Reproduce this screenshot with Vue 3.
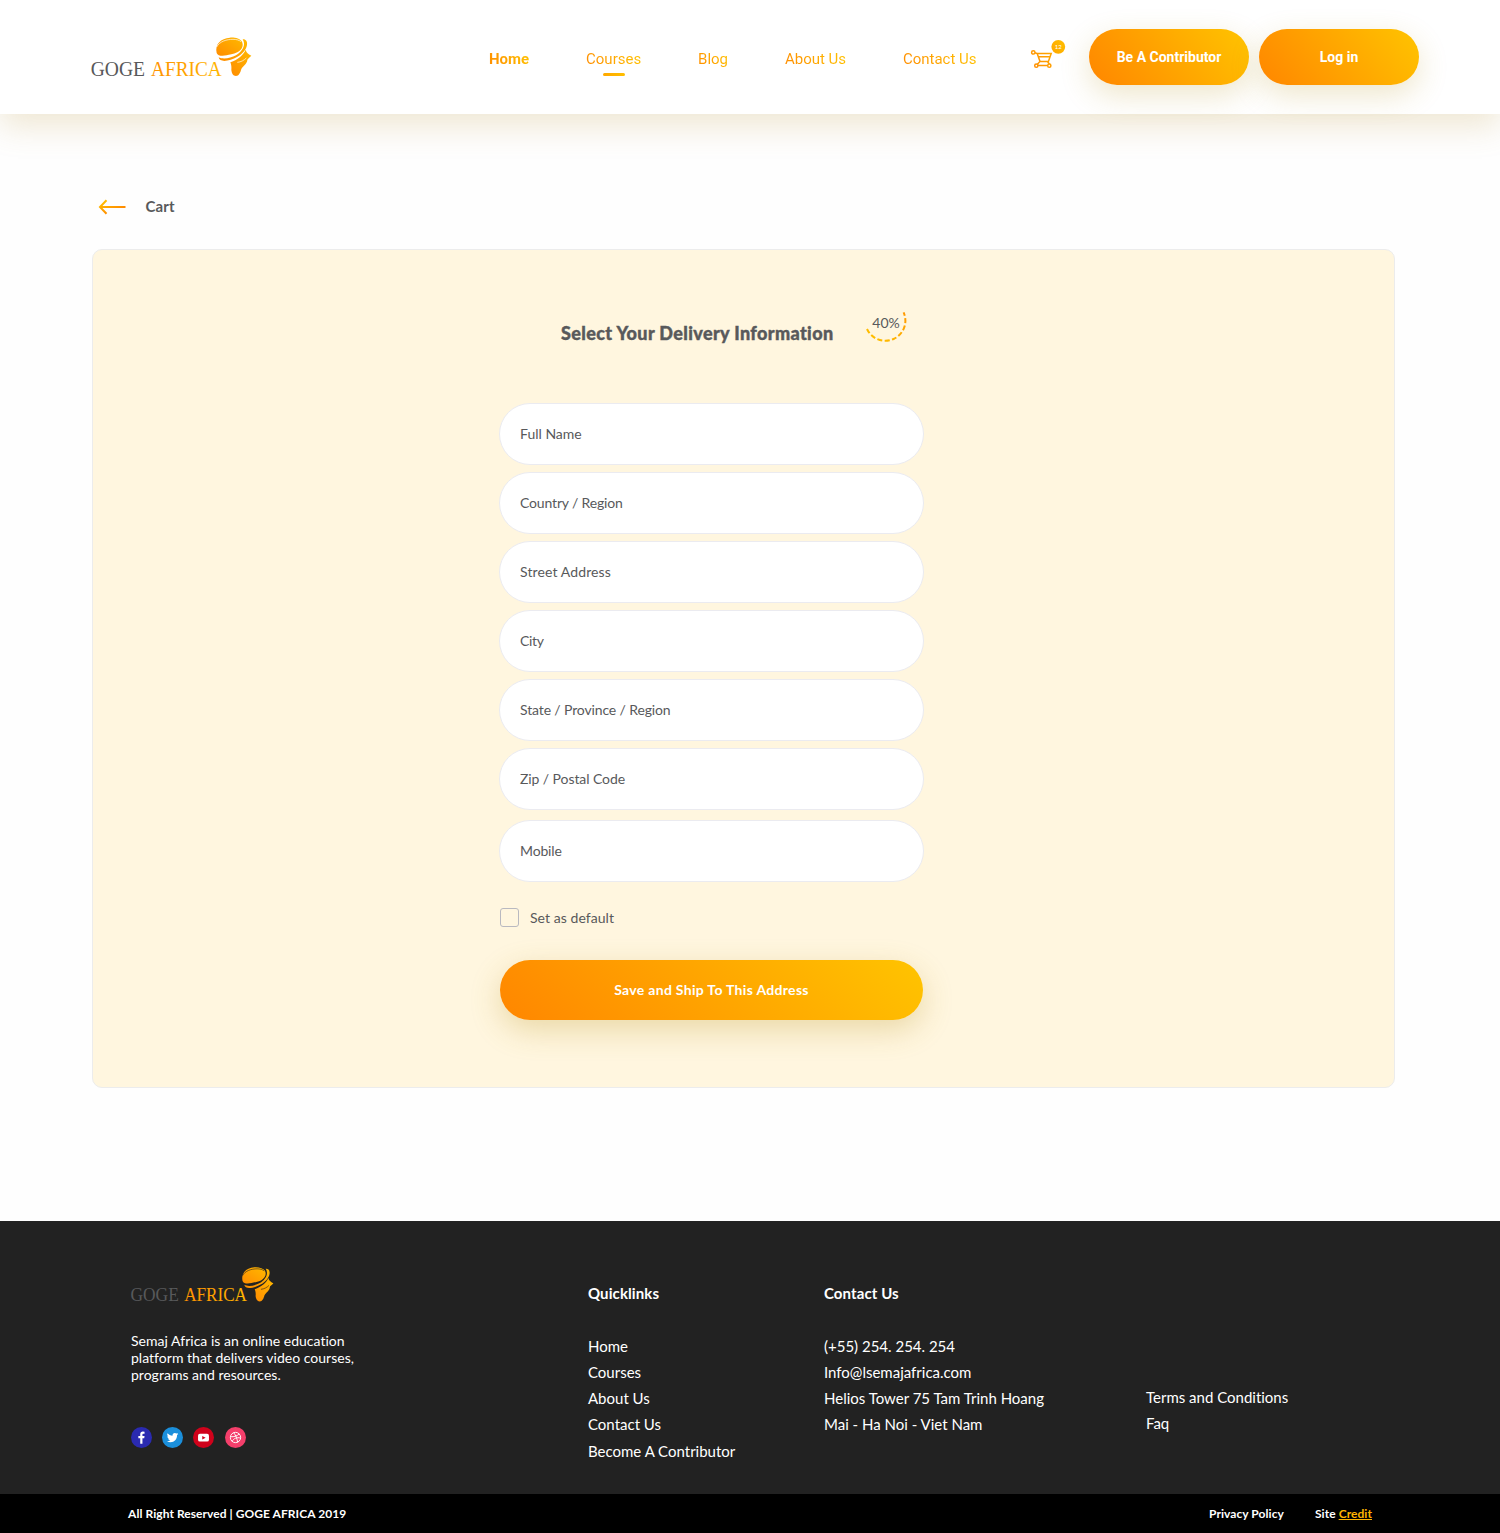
<script setup>
import { h } from 'vue'

const nav = [
  { label: 'Home', bold: true },
  { label: 'Courses', active: true },
  { label: 'Blog' },
  { label: 'About Us' },
  { label: 'Contact Us' },
]
const fields = [
  { label: 'Full Name', track: 0 },
  { label: 'Country / Region', track: -0.16 },
  { label: 'Street Address', track: 0.12 },
  { label: 'City', track: -0.3 },
  { label: 'State / Province / Region', track: -0.13 },
  { label: 'Zip / Postal Code', track: -0.08 },
  { label: 'Mobile', track: -0.15 },
]
const quicklinks = ['Home', 'Courses', 'About Us', 'Contact Us', 'Become A Contributor']
const contacts = ['(+55) 254. 254. 254', 'Info@lsemajafrica.com', 'Helios Tower 75 Tam Trinh Hoang', 'Mai - Ha Noi - Viet Nam']

const stop = (offset, color) => h('stop', { offset, 'stop-color': color })

// Wordmark plus head-wrap emblem, shared by the header and the footer
const BrandLogo = (props) =>
  h('svg', { viewBox: '0 0 570 195', role: 'img', 'aria-label': 'Goge Africa' }, [
    h('defs', [
      h('linearGradient', { id: props.uid + 'w', x1: 0, x2: 1, y1: 0, y2: 0 }, [stop('0', '#ff9100'), stop('1', '#ffb600')]),
      h('linearGradient', { id: props.uid + 'm', x1: 0, x2: 1, y1: 1, y2: 0 }, [stop('0', '#ff8c00'), stop('1', '#ffb900')]),
    ]),
    h('g', { 'font-family': '"Liberation Serif", serif', 'font-size': 66 }, [
      h('text', { x: 32, y: 152, textLength: 163, lengthAdjust: 'spacingAndGlyphs', fill: props.ink }, 'GOGE'),
      h('text', { x: 213, y: 152, textLength: 212, lengthAdjust: 'spacingAndGlyphs', fill: `url(#${props.uid}w)` }, 'AFRICA'),
    ]),
    h('g', { fill: `url(#${props.uid}m)` }, [
      h('path', { d: 'M410 84C404 58 422 40 450 38C466 37 480 42 485 49C492 61 487 74 472 82C460 88 447 89 440 91C427 94 413 93 410 84Z' }),
      h('path', { d: 'M488 43C497 42 503 49 501 60C499 74 486 88 471 96C452 107 419 115 416 97C428 104 452 100 468 91C487 80 499 60 488 43Z' }),
      h('path', { d: 'M497 74C499 84 507 88 514 92C509 98 502 101 502 105C501 117 490 122 484 132C481 143 477 153 468 153C459 153 455 144 454 135C455 127 454 119 451 112C475 103 490 90 497 74Z' }),
    ]),
    h('g', { fill: 'none', stroke: props.bg, 'stroke-width': 2 }, [
      h('path', { d: 'M410 66C419 49 440 43 459 43C469 43 477 45 483 50' }),
      h('path', { d: 'M472 112C483 111 492 106 499 99' }),
    ]),
  ])
BrandLogo.props = ['uid', 'ink', 'bg']
</script>

<template>
  <div class="page">
    <header class="topbar">
      <BrandLogo class="logo" uid="top" ink="#58595b" bg="#fff" />
      <nav class="nav">
        <a v-for="n in nav" :key="n.label" :class="{ bold: n.bold, active: n.active }"><span>{{ n.label }}</span></a>
      </nav>
      <div class="cart">
        <svg width="36" height="32" viewBox="0 0 36 32">
          <defs>
            <linearGradient id="cartg" gradientUnits="userSpaceOnUse" x1="2" y1="28" x2="32" y2="4">
              <stop offset="0" stop-color="#ff8c00" /><stop offset="1" stop-color="#ffb900" />
            </linearGradient>
          </defs>
          <g fill="none" stroke="url(#cartg)" stroke-width="1.5">
            <circle cx="3.3" cy="13.4" r="1.7" />
            <path d="M5 13.8L7.2 14.6L10 22.4L7.2 25.6M7.4 14.6H21.2L18.4 22.6H9.6M8.6 17.8H19.6M8 26.4H17.6M17.6 22.8L19.4 25" />
            <circle cx="6.3" cy="26.7" r="1.6" />
            <circle cx="19.3" cy="26.7" r="1.6" />
          </g>
          <circle cx="28.3" cy="7.8" r="6.9" fill="url(#cartg)" />
          <text x="28.3" y="9.9" text-anchor="middle" font-family="Lato, sans-serif" font-size="6" fill="#fff">12</text>
        </svg>
      </div>
      <button class="pill">Be A Contributor</button>
      <button class="pill">Log in</button>
    </header>

    <main>
      <div class="crumb">
        <svg width="28" height="16" viewBox="0 0 28 16">
          <defs>
            <linearGradient id="arr" gradientUnits="userSpaceOnUse" x1="4" y1="1" x2="10" y2="15">
              <stop offset="0" stop-color="#ffc400" /><stop offset="1" stop-color="#ff8c00" />
            </linearGradient>
          </defs>
          <path d="M8.5 1.2L2 8L8.5 14.8M2 8H27.5" fill="none" stroke="url(#arr)" stroke-width="2" />
        </svg>
        <span>Cart</span>
      </div>

      <section class="card">
        <div class="heading">
          <h1>Select Your Delivery Information</h1>
          <div class="progress">
            <svg width="44" height="44" viewBox="0 0 44 44">
              <defs>
                <linearGradient id="prog" x1="0" y1="1" x2="1" y2="0">
                  <stop offset="0" stop-color="#ffc400" /><stop offset="1" stop-color="#ff9800" />
                </linearGradient>
              </defs>
              <path d="M3 30A19.5 19.5 0 0 0 39.6 13.4" fill="none" stroke="url(#prog)" stroke-width="2" stroke-dasharray="5 2.4" />
            </svg>
            <span>40%</span>
          </div>
        </div>
        <form class="form" @submit.prevent>
          <label v-for="f in fields" :key="f.label" class="field" :style="{ letterSpacing: f.track + 'px' }">{{ f.label }}</label>
          <div class="default"><i></i><span>Set as default</span></div>
          <button class="save">Save and Ship To This Address</button>
        </form>
      </section>
    </main>

    <footer>
      <div class="foot">
        <div class="about">
          <BrandLogo class="flogo" uid="foot" ink="#58595b" bg="#222" />
          <p>Semaj Africa is an online education<br />platform that delivers video courses,<br />programs and resources.</p>
          <div class="social">
            <svg viewBox="0 0 20 20"><circle cx="10" cy="10" r="10" fill="#2a2ab0" /><path d="M8.8 16V10.6H7V8.5H8.8V7C8.8 5.2 9.8 4.4 11.3 4.4L12.9 4.5V6.4H11.8C11 6.4 10.9 6.8 10.9 7.3V8.5H12.9L12.6 10.6H10.9V16Z" fill="#fff" /></svg>
            <svg viewBox="0 0 20 20"><circle cx="10" cy="10" r="10" fill="#1b8fdb" /><path d="M15.5 6.6L14.3 7C14.8 6.7 15 6.3 15.2 5.8L13.8 6.3C12.3 4.8 9.7 6 10 8.3C8.1 8.2 6.5 7.3 5.3 5.9C4.7 7 5 8.3 6 9L5 8.7C5 9.8 5.8 10.7 6.8 11H5.8C6.1 11.9 6.9 12.5 7.9 12.6C7 13.3 5.8 13.6 4.6 13.5C9.3 16.2 14.5 13.3 14.3 7.9Z" fill="#fff" /></svg>
            <svg viewBox="0 0 20 20"><circle cx="10" cy="10" r="10" fill="#d0021b" /><rect x="4.8" y="6.5" width="10.4" height="7.4" rx="1.8" fill="#fff" /><path d="M8.8 8.5L12 10.2L8.8 11.9Z" fill="#d0021b" /></svg>
            <svg viewBox="0 0 20 20"><circle cx="10" cy="10" r="10" fill="#f43f6b" /><g fill="none" stroke="#fff" stroke-width=".9"><circle cx="10" cy="10" r="4.9" /><path d="M5.2 9.3C8.8 9.4 11.8 8.6 13.5 6.5M8.2 5.4C10.4 8 11.5 11 12 14.5M6.8 13.7C8.2 10.8 11.2 9.6 14.9 10.5" /></g></svg>
          </div>
        </div>
        <div class="col quick">
          <h2>Quicklinks</h2>
          <a v-for="q in quicklinks" :key="q">{{ q }}</a>
        </div>
        <div class="col contact">
          <h2>Contact Us</h2>
          <a v-for="c in contacts" :key="c">{{ c }}</a>
        </div>
        <div class="col terms">
          <a>Terms and Conditions</a>
          <a>Faq</a>
        </div>
      </div>
      <div class="legal">
        <span class="rights">All Right Reserved | GOGE AFRICA 2019</span>
        <span class="privacy">Privacy Policy</span>
        <span class="credit">Site <u>Credit</u></span>
      </div>
    </footer>
  </div>
</template>

<style>
body { margin: 0; }
</style>

<style scoped>
.page {
  width: 1500px;
  height: 1533px;
  display: flex;
  flex-direction: column;
  overflow: hidden;
  background: #fefefe;
  font-family: Lato, 'Open Sans', sans-serif;
  font-variant-ligatures: none;
  color: #58595b;
  white-space: nowrap;
}
.page * { box-sizing: border-box; }
button { border: 0; padding: 0; color: #fff; }

.topbar {
  height: 114px;
  flex: none;
  display: flex;
  align-items: flex-start;
  padding-left: 80px;
  background: #fff;
  box-shadow: 0 12px 30px rgba(186, 149, 58, 0.22);
  font-family: Roboto, sans-serif;
}
.logo { width: 190px; height: 65px; margin-top: 25px; flex: none; }
.nav { display: flex; gap: 56.9px; margin: 49px 0 0 219px; width: 541px; flex: none; }
.nav a { display: flex; flex-direction: column; align-items: center; font-size: 15px; line-height: 20px; }
.nav span {
  background: linear-gradient(60deg, #ff8c00, #ffc400);
  background-clip: text;
  -webkit-background-clip: text;
  color: transparent;
}
.nav .bold { font-weight: 700; }
.nav .active::after {
  content: '';
  width: 22px;
  height: 3px;
  margin-top: 4px;
  border-radius: 1.5px;
  background: linear-gradient(90deg, #ffa800, #ffbf00);
}
.cart { width: 59px; margin-top: 39px; flex: none; }
.pill {
  width: 160px;
  height: 56px;
  flex: none;
  margin: 29px 10px 0 0;
  border-radius: 28px;
  background: linear-gradient(52deg, #ff8600, #ffc400);
  box-shadow: 0 10px 30px rgba(186, 149, 38, 0.24);
  font: 700 14px Roboto, sans-serif;
}

main { height: 1107px; flex: none; padding: 82px 0 0 92px; }
.crumb { display: flex; align-items: center; height: 22px; padding-left: 6px; font-size: 15px; font-weight: 700; }
.crumb span { margin-left: 19.4px; padding-bottom: 2px; letter-spacing: 0.2px; }
.card {
  width: 1303px;
  height: 839px;
  margin-top: 31px;
  border: 1px solid #ececec;
  border-radius: 10px;
  background: #fff6df;
}
.heading { display: flex; height: 153px; padding: 49px 0 0 468px; }
h1 {
  margin: 22px 0 0;
  width: 303px;
  font-size: 18px;
  line-height: 24px;
  font-weight: 900;
  letter-spacing: 0.37px;
  -webkit-text-stroke: 0.4px #58595b;
}
.progress { width: 44px; height: 44px; display: grid; }
.progress > * { grid-area: 1 / 1; }
.progress span { place-self: center; font-size: 14px; margin-top: 3px; }
.form { width: 425px; margin-left: 406px; display: flex; flex-direction: column; }
.field {
  height: 62px;
  margin-bottom: 7px;
  padding-left: 20px;
  border: 1px solid #ebebf0;
  border-radius: 31px;
  background: #fff;
  font-size: 14px;
  line-height: 59px;
}
.field:first-child { line-height: 60px; }
.field:nth-child(6) { margin-bottom: 10px; }
.field:nth-child(7) { margin-bottom: 0; }
.default { display: flex; align-items: center; height: 19px; margin: 26px 0 33px 1px; font-size: 14px; letter-spacing: 0.06px; }
.default span { padding-bottom: 1px; }
.default i { width: 19px; height: 19px; margin-right: 11px; border: 1px solid #b9b9c0; border-radius: 3px; }
.save {
  width: 423px;
  height: 60px;
  margin-left: 1px;
  padding-bottom: 2px;
  border-radius: 30px;
  background: linear-gradient(45deg, #ff8600, #ffc400);
  box-shadow: 0 10px 30px rgba(186, 149, 38, 0.3);
  font: 700 14px Lato, sans-serif;
  letter-spacing: 0.31px;
}

footer { flex: 1; display: flex; flex-direction: column; background: #222; color: #fff; }
.foot { height: 273px; display: flex; padding-left: 131px; }
.about { width: 457px; }
.flogo { display: block; width: 169px; height: 58px; margin: 35px 0 0 -10px; }
.about p { margin: 18px 0 0; font-size: 14px; line-height: 17px; letter-spacing: 0.02px; }
.social { display: flex; gap: 10.2px; margin-top: 44px; }
.social svg { width: 21px; height: 21px; }
.col { display: flex; flex-direction: column; padding-top: 62px; font-size: 15px; }
.col h2 { margin: 0 0 29.7px; font-size: 15px; line-height: 20px; font-weight: 700; letter-spacing: 0.1px; }
.col a { line-height: 26.2px; }
.quick { width: 236px; }
.contact { width: 322px; }
.terms { padding-top: 162.6px; }
.legal { height: 39px; display: flex; padding-left: 128px; background: #000; font-size: 12px; line-height: 40px; font-weight: 700; letter-spacing: 0.06px; }
.rights { width: 1081px; }
.privacy { width: 106px; }
u { color: #ffb400; }
</style>
